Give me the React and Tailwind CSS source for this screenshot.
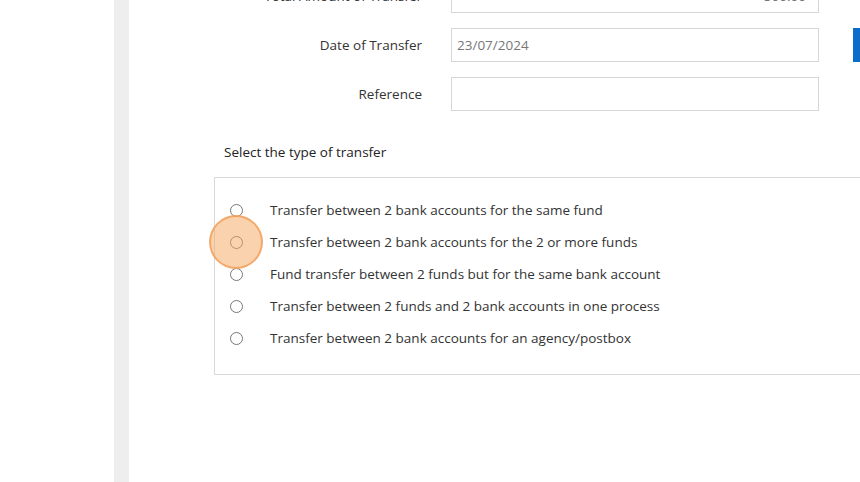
import React from "react";

const options = [
  "Transfer between 2 bank accounts for the same fund",
  "Transfer between 2 bank accounts for the 2 or more funds",
  "Fund transfer between 2 funds but for the same bank account",
  "Transfer between 2 funds and 2 bank accounts in one process",
  "Transfer between 2 bank accounts for an agency/postbox",
];

function Row({ label, value, right, button }) {
  return (
    <div className="flex items-center h-[34px]">
      <div className="w-[293px] text-right text-[13.5px] text-[#333]">{label}</div>
      <div
        className={`ml-[29px] w-[368px] h-[34px] border border-[#d6d6d6] flex items-center px-[5px] text-[13.5px] text-[#777] ${
          right ? "justify-end pr-[12px] text-[#333]" : ""
        }`}
      >
        {value}
      </div>
      {button ? <div className="ml-[34px] w-[20px] h-[34px] bg-[#0a6ccb]" /> : null}
    </div>
  );
}

export default function App() {
  return (
    <div
      className="w-[860px] h-[482px] overflow-hidden bg-white flex"
      style={{ fontFamily: '"Open Sans", sans-serif' }}
    >
      <div className="w-[114px] shrink-0 bg-white" />
      <div className="w-[15px] shrink-0 bg-[#efeeee]" />
      <div className="flex-1 relative">
        <div className="-mt-[21px] flex flex-col gap-[15px]">
          <Row label="Total Amount of Transfer" value="500.00" right />
          <Row label="Date of Transfer" value="23/07/2024" button />
          <Row label="Reference" value="" />
        </div>
        <div className="ml-[95px] mt-[31px] text-[13.5px] text-[#222]">Select the type of transfer</div>
        <div className="ml-[85px] mt-[15px] w-[700px] h-[198px] border border-[#d9d9d9] pt-[22px] flex flex-col gap-[12px]">
          {options.map((o) => (
            <div key={o} className="flex items-center h-[20px]">
              <div className="ml-[15px] w-[13px] h-[13px] rounded-full border border-[#777]" />
              <div className="ml-[27px] text-[13.5px] text-[#333]">{o}</div>
            </div>
          ))}
        </div>
        <div className="absolute left-[80px] top-[215px] w-[54px] h-[54px] rounded-full bg-[#f6a55e]/50 border-2 border-[#f2a05a]/80" />
      </div>
    </div>
  );
}
